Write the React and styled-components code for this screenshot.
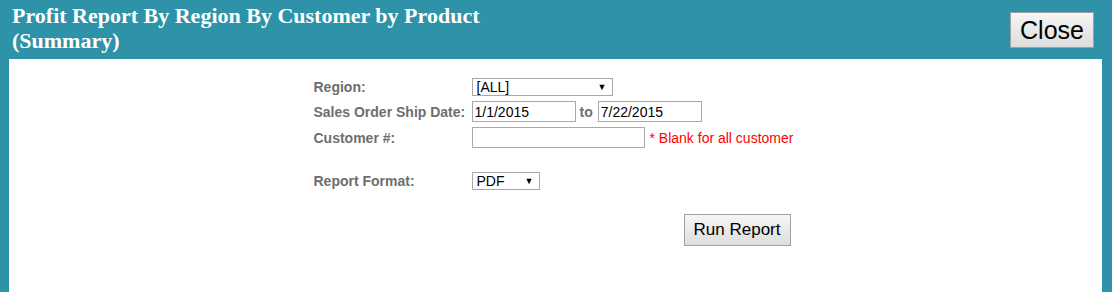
import React from 'react';
import styled, { createGlobalStyle } from 'styled-components';

const GlobalStyle = createGlobalStyle`
  html, body {
    margin: 0;
    padding: 0;
    background: #2e93a8;
  }
  body {
    font-family: "Liberation Sans", Arial, sans-serif;
  }
`;

const Frame = styled.div`
  width: 1112px;
  height: 292px;
  background: #2e93a8;
  display: flex;
  flex-direction: column;
  overflow: hidden;
`;

const Header = styled.div`
  height: 59px;
  display: flex;
  justify-content: space-between;
  align-items: flex-start;
  padding: 0 18px 0 12px;
  box-sizing: border-box;
`;

const Title = styled.h1`
  margin: 3px 0 0;
  max-width: 520px;
  font-family: "Liberation Serif", "Times New Roman", serif;
  font-weight: bold;
  font-size: 22px;
  line-height: 25px;
  color: #fff;
`;

const Button = styled.button`
  font-family: "Liberation Sans", Arial, sans-serif;
  font-size: ${p => p.size};
  color: #000;
  background: linear-gradient(#f6f6f6, #dddddd);
  border: 1px solid #a0a0a0;
  border-radius: 0;
  padding: 0;
  width: ${p => p.width};
  height: ${p => p.height};
  cursor: pointer;
`;

const CloseButton = styled(Button)`
  margin-top: 12px;
`;

const Panel = styled.div`
  flex: 1;
  margin: 0 10px 0 9px;
  background: #fff;
  padding-top: 19px;
`;

const Form = styled.div`
  width: 484px;
  margin: 0 auto;
  display: grid;
  grid-template-columns: 158px auto;
  row-gap: 5px;
  align-items: center;
`;

const Label = styled.label`
  font-size: 14px;
  font-weight: bold;
  color: #6e6e6e;
  margin-top: ${p => p.gap || 0};
`;

const Field = styled.div`
  display: flex;
  align-items: center;
  gap: 4px;
  margin-top: ${p => p.gap || 0};
`;

const Select = styled.div`
  width: ${p => p.width};
  height: 18px;
  box-sizing: border-box;
  border: 1px solid #a9a9a9;
  display: flex;
  align-items: center;
  justify-content: space-between;
  padding: 0 5px 0 4px;
  font-size: 14px;
  color: #000;
`;

const Arrow = styled.span`
  font-size: 9px;
`;

const Input = styled.input`
  width: ${p => p.width};
  height: ${p => p.height || '21px'};
  box-sizing: border-box;
  border: 1px solid #a9a9a9;
  padding: 0 2px;
  font-family: "Liberation Sans", Arial, sans-serif;
  font-size: 14px;
  color: #000;
  margin: 0;
`;

const To = styled.span`
  font-size: 14px;
  font-weight: bold;
  color: #6e6e6e;
  margin-right: 1px;
`;

const Hint = styled.span`
  font-size: 14px;
  color: #ff0000;
  margin-left: 1px;
`;

const Actions = styled.div`
  grid-column: 1 / -1;
  padding-left: 370px;
  margin-top: 19px;
`;

export default function App() {
  return (
    <>
      <GlobalStyle />
      <Frame>
        <Header>
          <Title>Profit Report By Region By Customer by Product (Summary)</Title>
          <CloseButton size="25px" width="84px" height="36px">Close</CloseButton>
        </Header>
        <Panel>
          <Form>
            <Label>Region:</Label>
            <Field>
              <Select width="141px">
                <span>[ALL]</span>
                <Arrow>▼</Arrow>
              </Select>
            </Field>

            <Label>Sales Order Ship Date:</Label>
            <Field>
              <Input width="104px" defaultValue="1/1/2015" />
              <To>to</To>
              <Input width="104px" defaultValue="7/22/2015" />
            </Field>

            <Label>Customer #:</Label>
            <Field>
              <Input width="173px" />
              <Hint>* Blank for all customer</Hint>
            </Field>

            <Label gap="19px">Report Format:</Label>
            <Field gap="19px">
              <Select width="68px">
                <span>PDF</span>
                <Arrow>▼</Arrow>
              </Select>
            </Field>

            <Actions>
              <Button size="17px" width="107px" height="32px">Run Report</Button>
            </Actions>
          </Form>
        </Panel>
      </Frame>
    </>
  );
}
